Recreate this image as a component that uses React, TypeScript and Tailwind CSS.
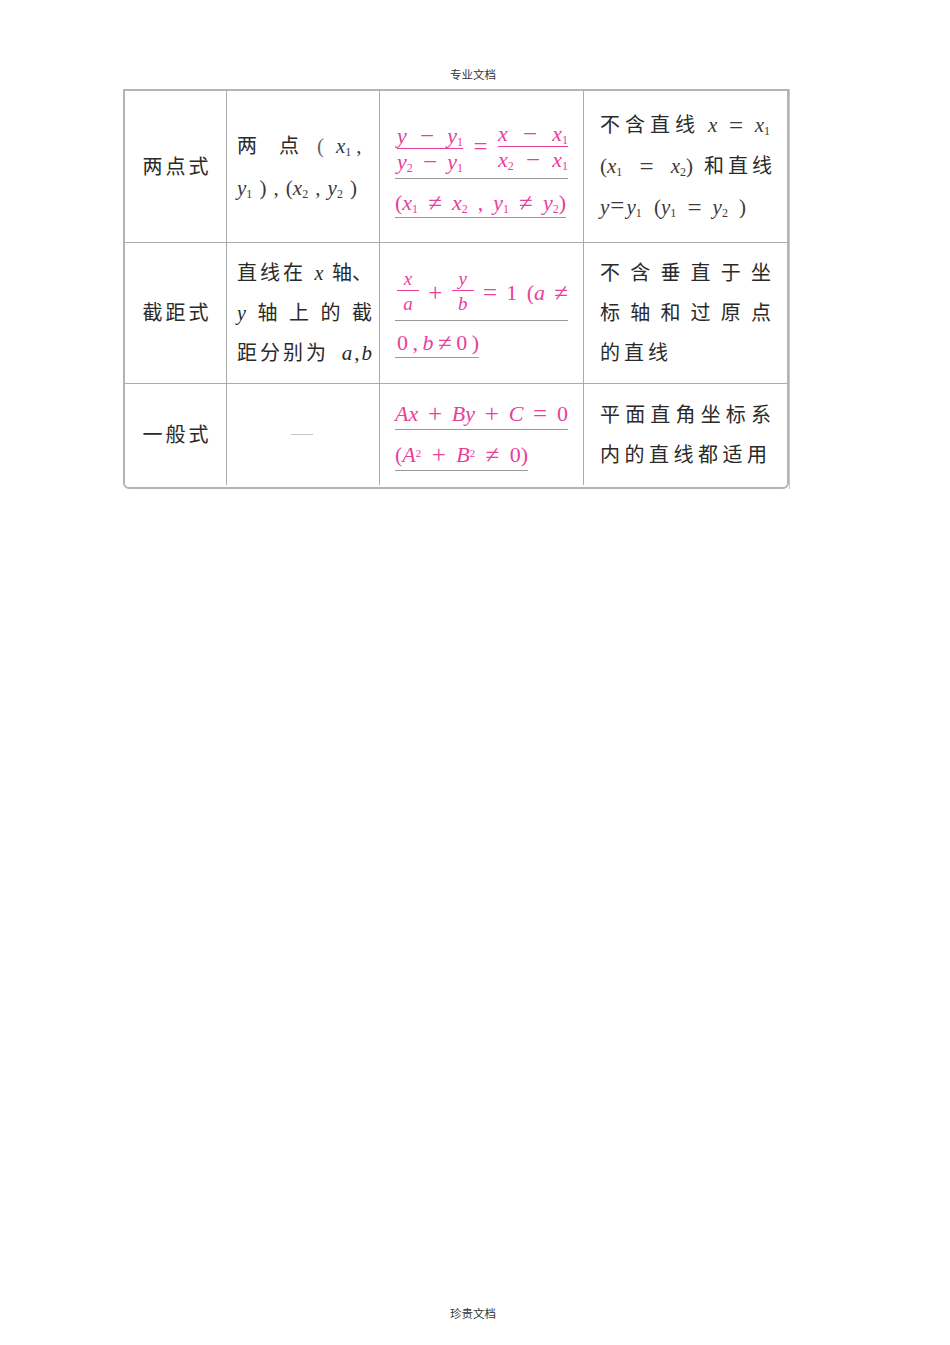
import React from "react";

const PINK = "text-[#e8409a]";

function S({ children }: { children: React.ReactNode }) {
  return <sub className="text-[12px] not-italic">{children}</sub>;
}
function Sp({ children }: { children: React.ReactNode }) {
  return <sup className="text-[11px] not-italic">{children}</sup>;
}
function I({ children }: { children: React.ReactNode }) {
  return <i className="italic">{children}</i>;
}
function O({ children }: { children: React.ReactNode }) {
  return <span className="text-[25px] leading-none">{children}</span>;
}
function JB({ w, children, cls }: { w: string; children: React.ReactNode; cls?: string }) {
  return <div className={`flex justify-between items-center whitespace-nowrap ${w} ${cls ?? ""}`}>{children}</div>;
}
function Frac({ n, d, small, cls }: { n: React.ReactNode; d: React.ReactNode; small?: boolean; cls?: string }) {
  return (
    <span className={`inline-flex flex-col items-stretch ${cls ?? ""}`}>
      <span className={small ? "leading-[22px] text-[19px] text-center" : "leading-[25px]"}>{n}</span>
      <span className="h-[1.5px] w-full bg-[#e8409a]" />
      <span className={small ? "leading-[26px] text-[19px] text-center" : "leading-[25px]"}>{d}</span>
    </span>
  );
}
function UL({ children }: { children: React.ReactNode }) {
  return (
    <div className="w-fit border-b-[1.5px] border-[#9a9a9a] h-[31px] leading-[31px] flex items-center whitespace-nowrap">
      {children}
    </div>
  );
}

export default function App() {
  const cell = "flex flex-col justify-center border-r border-b border-[#ababab]";
  const cjk = "text-[20px] text-[#2a2a2a]";
  return (
    <div className="w-[950px] h-[1345px] bg-white flex flex-col font-['Liberation_Serif','Noto_Sans_CJK_SC',serif] text-[#333]">
      <div className="pt-[66px] h-[89px] text-center text-[11.5px] leading-[16px] text-[#333] font-['Noto_Sans_CJK_SC',sans-serif] pr-[4px]">
        专业文档
      </div>
      <div className="flex ml-[123px]">
        <div className="w-[666px] border-2 border-[#b4b4b4] rounded-b-[6px] overflow-hidden">
          <div className="grid grid-cols-[102px_153px_204px_203px] grid-rows-[152px_141px_101px]">
            {/* Row 1 */}
            <div className={`${cell} items-center ${cjk}`}>
              <div className="tracking-[3px] pl-[3px]">两点式</div>
            </div>
            <div className={`${cell} pl-[10px] text-[21px] text-[#3a3a3a]`}>
              <div className="flex items-center leading-[42px] whitespace-nowrap">
                <span className="text-[#2a2a2a] text-[20px]">两</span>
                <span className="ml-[22px] text-[#2a2a2a] text-[20px]">点</span>
                <span className="ml-[18px] text-[#666]">(</span>
                <span className="ml-[12px]"><I>x</I><S>1</S></span>
                <span className="ml-[5px]">,</span>
              </div>
              <JB w="w-[120px]" cls="leading-[42px] h-[42px]">
                <span><I>y</I><S>1</S></span>
                <span>)</span>
                <span>,</span>
                <span>(<I>x</I><S>2</S></span>
                <span>,</span>
                <span><I>y</I><S>2</S></span>
                <span>)</span>
              </JB>
            </div>
            <div className={`${cell} pl-[15px] text-[22px] ${PINK}`}>
              <div className="mt-[4px] w-[173px] border-b-[1.5px] border-[#9a9a9a] pb-[4px] flex items-center justify-between whitespace-nowrap">
                <span className="ml-[2px]">
                  <Frac
                    n={<JB w="w-[66px]"><I>y</I><O>−</O><span><I>y</I><S>1</S></span></JB>}
                    d={<JB w="w-[66px]"><span><I>y</I><S>2</S></span><O>−</O><span><I>y</I><S>1</S></span></JB>}
                  />
                </span>
                <O>=</O>
                <Frac
                  n={<JB w="w-[70px]"><I>x</I><O>−</O><span><I>x</I><S>1</S></span></JB>}
                  d={<JB w="w-[70px]"><span><I>x</I><S>2</S></span><O>−</O><span><I>x</I><S>1</S></span></JB>}
                />
              </div>
              <div className="mt-[8px]">
                <UL>
                  <JB w="w-[171px]">
                    <span>(<I>x</I><S>1</S></span>
                    <O>≠</O>
                    <span><I>x</I><S>2</S></span>
                    <span>,</span>
                    <span><I>y</I><S>1</S></span>
                    <O>≠</O>
                    <span><I>y</I><S>2</S>)</span>
                  </JB>
                </UL>
              </div>
            </div>
            <div className={`${cell} border-r-0 pl-[16px] text-[21px] text-[#3a3a3a]`}>
              <div className="w-[170px] flex items-center leading-[41px] h-[41px] whitespace-nowrap">
                <span className={`${cjk} tracking-[5px]`}>不含直线</span>
                <JB w="w-[62px]" cls="ml-auto">
                  <I>x</I><O>=</O><span><I>x</I><S>1</S></span>
                </JB>
              </div>
              <div className="w-[172px] flex items-center leading-[41px] h-[41px] whitespace-nowrap">
                <JB w="w-[93px]">
                  <span>(<I>x</I><S>1</S></span><O>=</O><span><I>x</I><S>2</S>)</span>
                </JB>
                <span className={`${cjk} tracking-[4px] ml-auto -mr-[4px]`}>和直线</span>
              </div>
              <div className="w-[146px] flex items-center leading-[41px] h-[41px] whitespace-nowrap">
                <I>y</I>
                <span className="ml-[1px]"><O>=</O></span>
                <span className="ml-[2px]"><I>y</I><S>1</S></span>
                <JB w="w-[92px]" cls="ml-auto">
                  <span>(<I>y</I><S>1</S></span><O>=</O><span><I>y</I><S>2</S></span><span>)</span>
                </JB>
              </div>
            </div>

            {/* Row 2 */}
            <div className={`${cell} items-center ${cjk}`}>
              <div className="tracking-[3px] pl-[3px]">截距式</div>
            </div>
            <div className={`${cell} pl-[10px] ${cjk}`}>
              <div className="w-[135px] flex justify-between items-center leading-[40px] whitespace-nowrap">
                <span className="tracking-[3px]">直线在</span>
                <I>x</I>
                <span>轴、</span>
              </div>
              <div className="w-[135px] flex justify-between items-center leading-[40px] whitespace-nowrap">
                <I>y</I>
                <span>轴</span>
                <span>上</span>
                <span>的</span>
                <span>截</span>
              </div>
              <div className="w-[135px] flex justify-between items-center leading-[40px] whitespace-nowrap">
                <span className="tracking-[3px]">距分别为</span>
                <span className="text-[21px]"><I>a</I><span className="mx-[2px]">,</span><I>b</I></span>
              </div>
            </div>
            <div className={`${cell} pl-[15px] text-[22px] ${PINK}`}>
              <div className="w-[173px] border-b-[1.5px] border-[#9a9a9a] pb-[3px] pl-[2px] flex items-center justify-between whitespace-nowrap">
                <Frac small cls="w-[22px]" n={<I>x</I>} d={<I>a</I>} />
                <O>+</O>
                <Frac small cls="w-[22px]" n={<I>y</I>} d={<I>b</I>} />
                <O>=</O>
                <span>1</span>
                <span>(<I>a</I></span>
                <O>≠</O>
              </div>
              <div className="mt-[6px]">
                <UL>
                  <JB w="w-[84px]" cls="pl-[2px]">
                    <span>0</span><span>,</span><I>b</I><O>≠</O><span>0</span><span>)</span>
                  </JB>
                </UL>
              </div>
            </div>
            <div className={`${cell} border-r-0 pl-[16px] ${cjk}`}>
              <div className="w-[171px] flex justify-between leading-[40px]">
                <span>不</span><span>含</span><span>垂</span><span>直</span><span>于</span><span>坐</span>
              </div>
              <div className="w-[171px] flex justify-between leading-[40px]">
                <span>标</span><span>轴</span><span>和</span><span>过</span><span>原</span><span>点</span>
              </div>
              <div className="leading-[40px] tracking-[4px]">的直线</div>
            </div>

            {/* Row 3 */}
            <div className={`${cell} border-b-0 items-center ${cjk}`}>
              <div className="tracking-[3px] pl-[3px]">一般式</div>
            </div>
            <div className={`${cell} border-b-0 items-center`}>
              <div className="w-[22px] h-[1.5px] bg-[#c4c4c4] mr-[2px]" />
            </div>
            <div className={`${cell} border-b-0 pl-[15px] text-[22px] ${PINK}`}>
              <UL>
                <JB w="w-[173px]">
                  <span><I>A</I><I>x</I></span>
                  <O>+</O>
                  <span><I>B</I><I>y</I></span>
                  <O>+</O>
                  <I>C</I>
                  <O>=</O>
                  <span>0</span>
                </JB>
              </UL>
              <div className="mt-[10px]">
                <UL>
                  <JB w="w-[133px]">
                    <span>(<I>A</I><Sp>2</Sp></span>
                    <O>+</O>
                    <span><I>B</I><Sp>2</Sp></span>
                    <O>≠</O>
                    <span>0)</span>
                  </JB>
                </UL>
              </div>
            </div>
            <div className={`${cell} border-b-0 border-r-0 pl-[16px] ${cjk}`}>
              <div className="w-[171px] flex justify-between leading-[40px]">
                <span>平</span><span>面</span><span>直</span><span>角</span><span>坐</span><span>标</span><span>系</span>
              </div>
              <div className="w-[167px] flex justify-between leading-[40px]">
                <span>内</span><span>的</span><span>直</span><span>线</span><span>都</span><span>适</span><span>用</span>
              </div>
            </div>
          </div>
        </div>
        <div className="w-[1px] h-[400px] bg-[#c8c8c8]" />
      </div>
      <div className="flex-1" />
      <div className="h-[40px] text-center text-[11.5px] leading-[16px] text-[#333] font-['Noto_Sans_CJK_SC',sans-serif] pr-[4px]">
        珍贵文档
      </div>
    </div>
  );
}
